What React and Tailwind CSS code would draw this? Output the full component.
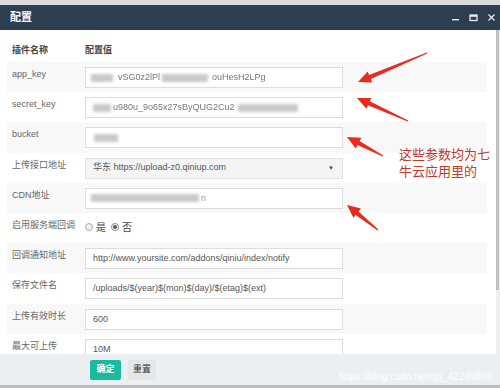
const font = "font-['Liberation_Sans','Noto_Sans_CJK_SC',sans-serif]";

// tapered red arrow from tail (tx,ty) to head (hx,hy)
const arrowPoints = (tx, ty, hx, hy) => {
  const dx = hx - tx;
  const dy = hy - ty;
  const len = Math.hypot(dx, dy);
  const ux = dx / len;
  const uy = dy / len;
  const nx = -uy;
  const ny = ux;
  const headLen = 13;
  const bx = hx - ux * headLen;
  const by = hy - uy * headLen;
  const p = (x, y) => `${x.toFixed(1)},${y.toFixed(1)}`;
  return [
    p(tx + nx * 0.6, ty + ny * 0.6),
    p(bx + nx * 2.2, by + ny * 2.2),
    p(bx + nx * 6, by + ny * 6),
    p(hx, hy),
    p(bx - nx * 6, by - ny * 6),
    p(bx - nx * 2.2, by - ny * 2.2),
    p(tx - nx * 0.6, ty - ny * 0.6),
  ].join(" ");
};

const arrows = [
  [427, 53, 358, 82],
  [408, 121, 357, 98],
  [383, 156, 347, 137],
  [378, 230, 347, 205],
];

const Blur = ({ w }) => (
  <span className={`inline-block h-[8px] bg-[#c9c9c9] blur-[1.5px] ${w}`} />
);

const TextInput = ({ children }) => (
  <div className="mt-[5px] flex h-[21px] w-[258px] items-center overflow-hidden whitespace-nowrap border border-[#dcdcdc] bg-white pl-[7px] text-[9px] leading-[11px] text-[#555]">
    {children}
  </div>
);

const rows = [
  {
    label: "app_key",
    value: (
      <TextInput>
        <Blur w="w-[22px] ml-[-2px]" />
        <span className="ml-[5px] text-[#777] blur-[0.4px]">vSG0z2lPl</span>
        <Blur w="w-[46px] ml-[2px]" />
        <span className="ml-[4px] text-[#777] blur-[0.4px]">ouHesH2LPg</span>
      </TextInput>
    ),
  },
  {
    label: "secret_key",
    value: (
      <TextInput>
        <Blur w="w-[18px]" />
        <span className="ml-[2px] text-[#777] blur-[0.4px]">u980u_9o65x27sByQUG2Cu2</span>
        <Blur w="w-[60px] ml-[3px]" />
      </TextInput>
    ),
  },
  {
    label: "bucket",
    value: (
      <TextInput>
        <Blur w="w-[24px] ml-[1px]" />
      </TextInput>
    ),
  },
  {
    label: "上传接口地址",
    value: (
      <div className="mt-[5px] flex h-[21px] w-[258px] items-center justify-between border border-[#e2e2e2] bg-[#f4f4f4] pl-[7px] pr-[8px] text-[9px] text-[#555]">
        <span>华东 https://upload-z0.qiniup.com</span>
        <span className="text-[6px] text-[#444]">▼</span>
      </div>
    ),
  },
  {
    label: "CDN地址",
    value: (
      <TextInput>
        <Blur w="w-[108px] ml-[-2px]" />
        <span className="ml-[2px] text-[#999] blur-[0.4px]">n</span>
      </TextInput>
    ),
  },
  {
    label: "启用服务端回调",
    value: (
      <div className="mt-[7px] flex items-center gap-[3px] text-[10px] text-[#444]">
        <span className="h-[8px] w-[8px] rounded-full border border-[#aaa] bg-[#f0f0f0]" />
        <span>是</span>
        <span className="ml-[2px] flex h-[8px] w-[8px] items-center justify-center rounded-full border border-[#888] bg-white">
          <span className="h-[4px] w-[4px] rounded-full bg-[#555]" />
        </span>
        <span>否</span>
      </div>
    ),
  },
  {
    label: "回调通知地址",
    value: <TextInput>http://www.yoursite.com/addons/qiniu/index/notify</TextInput>,
  },
  {
    label: "保存文件名",
    value: <TextInput>/uploads/$(year)$(mon)$(day)/$(etag)$(ext)</TextInput>,
  },
  { label: "上传有效时长", value: <TextInput>600</TextInput> },
  { label: "最大可上传", value: <TextInput>10M</TextInput> },
];

const App = () => {
  return (
    <div className={`relative flex h-[388px] w-[500px] flex-col overflow-hidden bg-white ${font}`}>
      {/* page behind the dialog */}
      <div className="h-[5px] shrink-0 bg-[#d9dadc]" />

      {/* Title bar */}
      <div className="flex h-[25px] shrink-0 items-center justify-between bg-[#2c3e50] pl-[10px] pr-[4px]">
        <span className="text-[11px] font-bold text-white">配置</span>
        <div className="flex items-center gap-[9px] text-white">
          <svg width="9" height="9" viewBox="0 0 9 9">
            <rect x="1" y="6" width="7" height="1.4" fill="#e8ecef" />
          </svg>
          <svg width="9" height="9" viewBox="0 0 9 9">
            <rect x="1" y="2" width="7" height="5.5" fill="none" stroke="#e8ecef" strokeWidth="1.3" />
            <rect x="1" y="2" width="7" height="1.8" fill="#e8ecef" />
          </svg>
          <svg width="9" height="9" viewBox="0 0 9 9">
            <path d="M1.5 1.5 L7.5 7.5 M7.5 1.5 L1.5 7.5" stroke="#e8ecef" strokeWidth="1.3" />
          </svg>
        </div>
      </div>

      {/* Body */}
      <div className="relative flex min-h-0 flex-1">
        <div className="min-w-0 flex-1 overflow-hidden pl-[7px] pr-[9px]">
          {/* header */}
          <div className="flex h-[32px] pt-[14px] text-[9px] font-bold text-[#444]">
            <div className="w-[78px] pl-[5px]">插件名称</div>
            <div>配置值</div>
          </div>

          {rows.map((row, i) => (
            <div
              key={row.label}
              className={`flex h-[30.2px] ${i % 2 === 0 ? "bg-[#f8f8f8]" : "bg-white"}`}
            >
              <div className="w-[78px] shrink-0 whitespace-nowrap pl-[5px] pt-[5px] text-[9px] leading-[14px] text-[#666]">
                {row.label}
              </div>
              <div>{row.value}</div>
            </div>
          ))}
        </div>

        {/* scrollbar */}
        <div className="w-[4px] bg-[#eeeeee]">
          <div className="h-[260px] w-[3px] bg-[#c1c1c1]" />
        </div>

        {/* annotations */}
        <svg
          className="pointer-events-none absolute left-0 top-[-30px]"
          width="500"
          height="388"
          viewBox="0 0 500 388"
        >
          {arrows.map((a, i) => (
            <polygon key={i} points={arrowPoints(...a)} fill="#ea2a1f" />
          ))}
        </svg>
        <div className="absolute left-[399px] top-[116px] text-[13px] leading-[17px] text-[#c0392b]">
          <div>这些参数均为七</div>
          <div>牛云应用里的</div>
        </div>
      </div>

      {/* Footer */}
      <div className="relative flex h-[31px] shrink-0 items-center gap-[7px] bg-[#eceff1] pl-[90px]">
        <button className="h-[20px] w-[31px] rounded-[2px] bg-[#18bc9c] text-[9px] font-bold text-white">
          确定
        </button>
        <button className="h-[20px] w-[28px] rounded-[2px] bg-[#e4e6e8] text-[9px] text-[#333]">
          重置
        </button>
        <span className="absolute right-[8px] top-[15px] text-[10px] text-white/80">
          https://blog.csdn.net/qq_42249896
        </span>
      </div>
      <div className="h-[3px] shrink-0 bg-[#b9bcbf]" />
    </div>
  );
};

export default App;
